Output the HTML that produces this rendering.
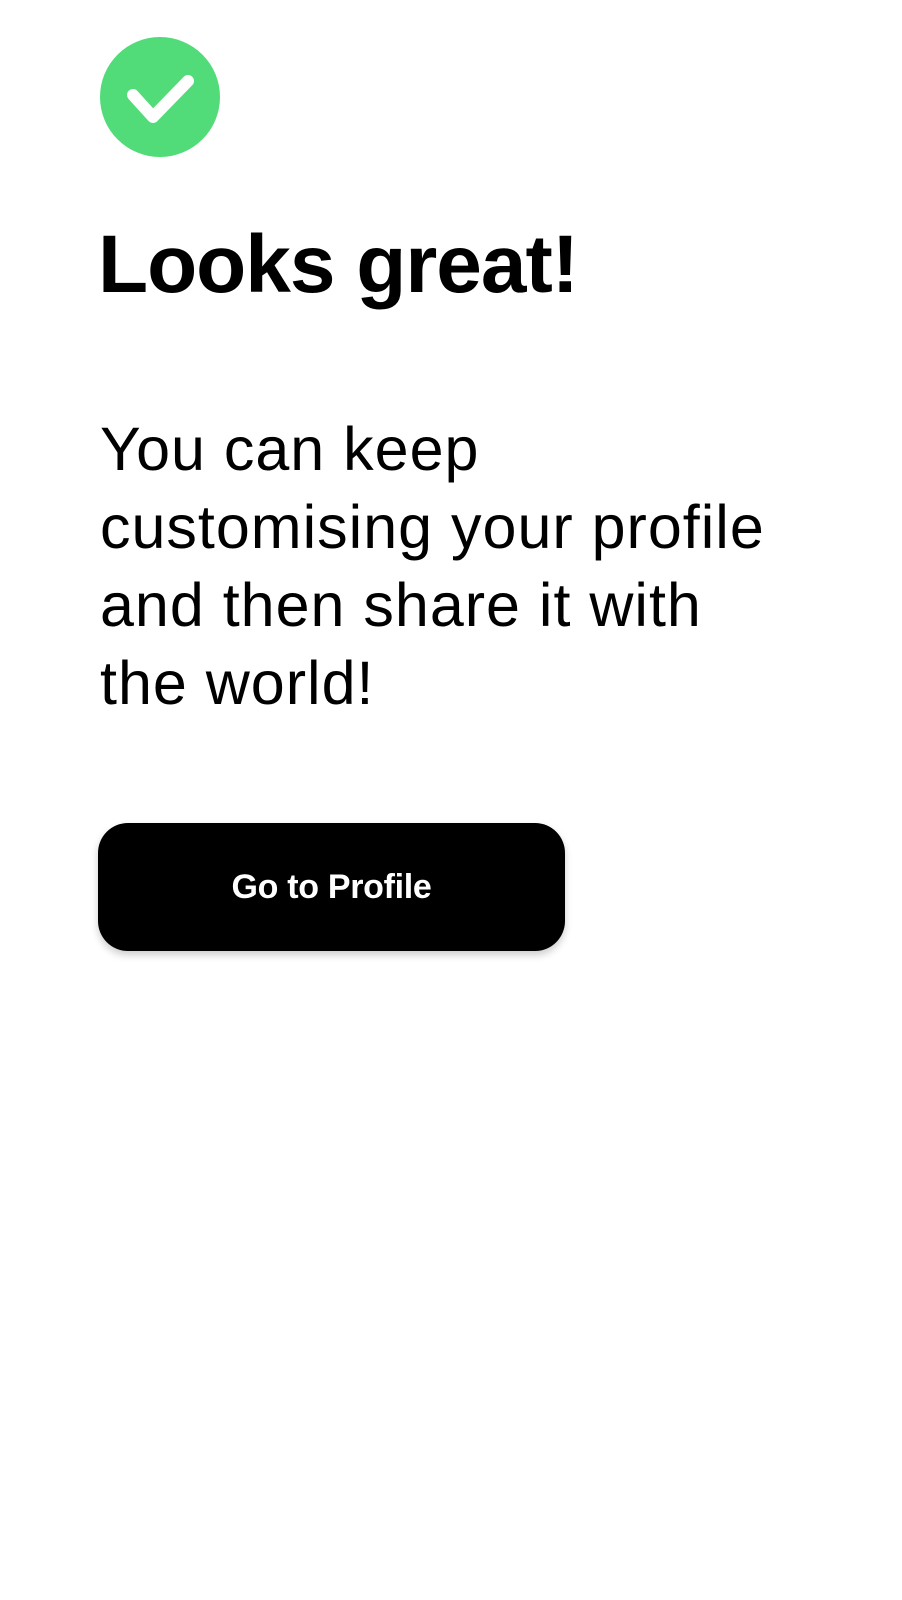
<!DOCTYPE html>
<html><head><meta charset="utf-8"><style>
html,body{margin:0;padding:0;background:#fff;width:902px;height:1600px;overflow:hidden;font-family:"Liberation Sans",sans-serif;color:#000}
.c{position:absolute;left:100px;top:37px}
h1{position:absolute;left:98px;top:215px;margin:0;font-size:82px;font-weight:bold;letter-spacing:-1px;line-height:100px;white-space:nowrap}
p{position:absolute;left:100px;top:410px;margin:0;font-size:61px;line-height:78px;width:800px;letter-spacing:1px;white-space:nowrap}
.b{position:absolute;left:98px;top:823px;width:467px;height:128px;background:#000;border-radius:30px;box-shadow:0 4px 8px rgba(0,0,0,0.2);color:#fff;font-weight:bold;font-size:34px;line-height:128px;text-align:center;letter-spacing:-0.3px}
</style></head><body>
<svg class="c" width="120" height="120" viewBox="0 0 120 120"><circle cx="60" cy="60" r="60" fill="#52dc79"/><polyline points="33,58 53,80 88,44" fill="none" stroke="#fff" stroke-width="12" stroke-linecap="round" stroke-linejoin="round"/></svg>
<h1>Looks great!</h1>
<p>You can keep<br>customising your profile<br>and then share it with<br>the world!</p>
<div class="b">Go to Profile</div>
</body></html>
